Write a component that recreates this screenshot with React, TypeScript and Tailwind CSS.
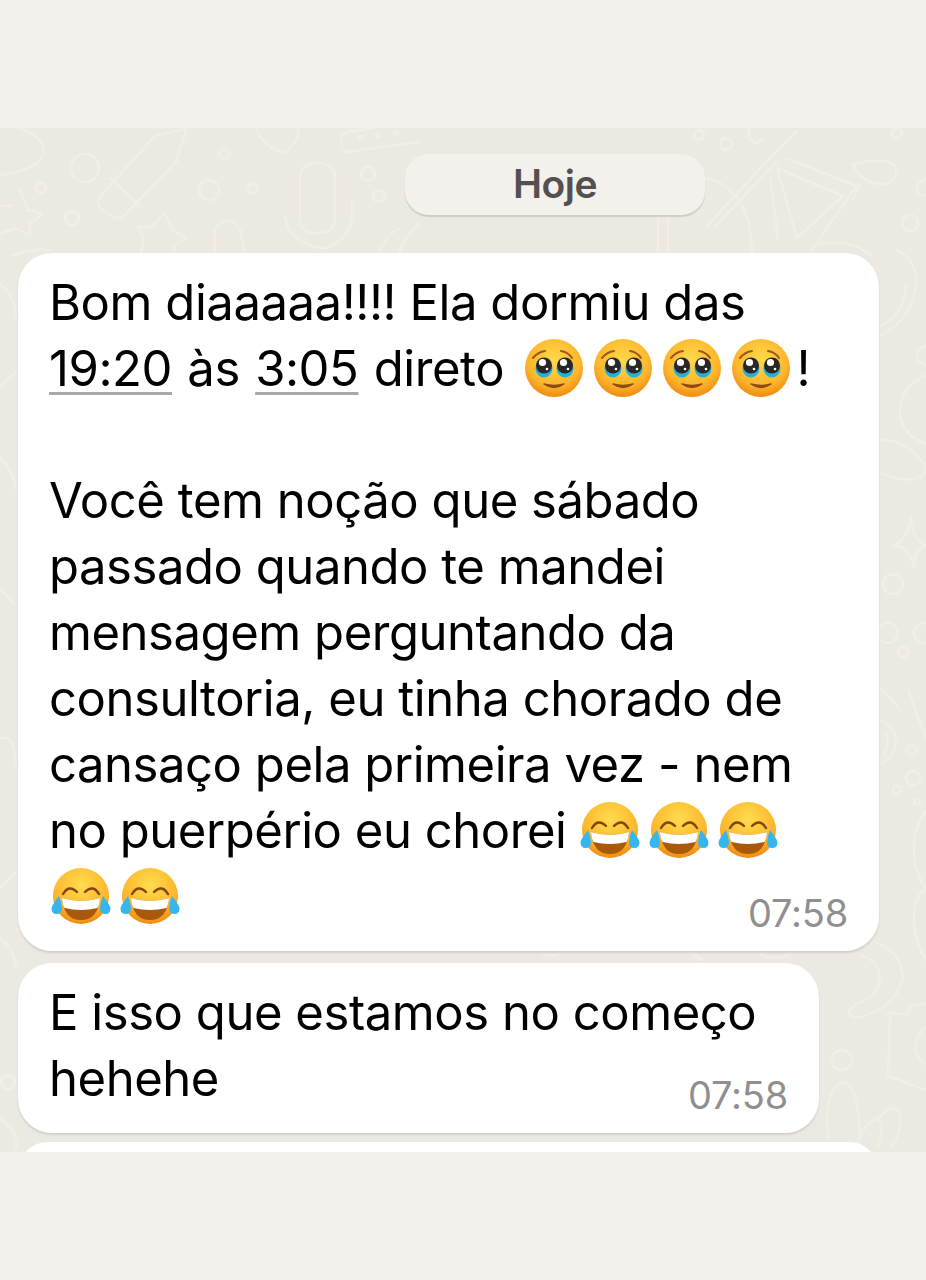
const Pleading = () => (
  <svg viewBox="0 0 60 60" className="inline-block w-[60px] h-[60px] mr-[9px] align-[-12px]">
    <defs>
      <radialGradient id="pf" cx="50%" cy="35%" r="65%">
        <stop offset="0%" stopColor="#ffd84a" />
        <stop offset="70%" stopColor="#fdb62c" />
        <stop offset="100%" stopColor="#f08a12" />
      </radialGradient>
    </defs>
    <circle cx="30" cy="30" r="29" fill="url(#pf)" />
    <path d="M9 20 Q14 14 21 13" fill="none" stroke="#a0561a" strokeWidth="2" strokeLinecap="round" />
    <path d="M48 20 Q44 14 37 13" fill="none" stroke="#a0561a" strokeWidth="2" strokeLinecap="round" />
    <ellipse cx="20" cy="30" rx="8.5" ry="9.5" fill="#1fb2de" />
    <ellipse cx="41" cy="30" rx="8.5" ry="9.5" fill="#1fb2de" />
    <circle cx="20" cy="27.5" r="8" fill="#2b2626" />
    <circle cx="41" cy="27.5" r="8" fill="#2b2626" />
    <circle cx="18.5" cy="24.5" r="3.6" fill="#fff" />
    <circle cx="39.5" cy="24.5" r="3.6" fill="#fff" />
    <circle cx="23" cy="31" r="1.3" fill="#fff" />
    <circle cx="44" cy="31" r="1.3" fill="#fff" />
    <path d="M20 46 Q30 53 40 46 Q30 49 20 46Z" fill="#8e4a12" stroke="#8e4a12" strokeWidth="1.4" strokeLinejoin="round" />
  </svg>
);

const Laugh = () => (
  <svg viewBox="0 0 60 58" className="inline-block w-[60px] h-[58px] mr-[9px] align-[-11px]">
    <defs>
      <radialGradient id="lf" cx="50%" cy="30%" r="70%">
        <stop offset="0%" stopColor="#ffdc4e" />
        <stop offset="70%" stopColor="#fdb62c" />
        <stop offset="100%" stopColor="#ef8a12" />
      </radialGradient>
    </defs>
    <circle cx="30" cy="29" r="28" fill="url(#lf)" />
    <path d="M12 27 Q18 17 26 25" fill="none" stroke="#80460f" strokeWidth="2.4" strokeLinecap="round" />
    <path d="M34 25 Q42 17 48 27" fill="none" stroke="#80460f" strokeWidth="2.4" strokeLinecap="round" />
    <path d="M11 31 Q30 37 49 31 Q47 53 30 53 Q13 53 11 31Z" fill="#a8590c" />
    <path d="M11 31 Q30 37 49 31 Q48.5 38 46.5 41 Q30 45 13.5 41 Q11.5 38 11 31Z" fill="#fff" />
    <path d="M8 29 Q1 38 0.5 41 Q0.5 47 5.5 47 Q11 47 11 41 Q10.5 35 8 29Z" fill="#35b6ee" />
    <path d="M52 29 Q59 38 59.5 41 Q59.5 47 54.5 47 Q49 47 49 41 Q49.5 35 52 29Z" fill="#35b6ee" />
  </svg>
);

const Doodles = () => (
  <svg viewBox="0 0 926 1024" className="absolute inset-0 w-full h-full" fill="none" stroke="#f1eee8" strokeWidth="2.5" strokeLinecap="round" strokeLinejoin="round">
    {/* top-left */}
    <path d="M18 0 Q44 8 44 24 Q40 42 0 47" />
    <circle cx="85" cy="40" r="14" /><circle cx="41" cy="60" r="5" /><circle cx="72" cy="90" r="7" />
    <path d="M20 62 L28 82 L42 86 L30 96 L30 108 L16 100 L0 106 M0 78 L12 78 Z" />
    <path d="M99 70 L155 8 L187 0 L176 34 L122 90 Q114 92 100 80 Q96 75 99 70Z M110 50 L140 78" />
    <circle cx="209" cy="62" r="10" /><circle cx="253" cy="61" r="5" /><circle cx="224" cy="26" r="5" />
    <path d="M300 50 Q300 35 317 35 Q335 35 335 50 L335 90 Q335 105 317 105 Q300 105 300 90Z" />
    <path d="M285 88 Q290 118 325 120 Q356 112 352 72" />
    <circle cx="368" cy="46" r="7" /><circle cx="379" cy="68" r="6" />
    <path d="M256 0 Q264 20 285 25 Q300 12 298 0" />
    <path d="M346 24 Q336 14 346 4 L376 0 M346 24 L420 14" />
    <circle cx="360" cy="10" r="2" /><circle cx="378" cy="7" r="2" /><circle cx="396" cy="5" r="2" />
    <path d="M165 85 L172 102 L186 110 L174 118 L174 128 M138 98 L150 100 L165 85 M138 98 L144 112 L140 128" />
    <path d="M215 128 L215 100 Q230 84 240 102 L246 128" />
    <path d="M378 128 Q384 108 400 100 M398 128 Q402 112 418 96" />
    <path d="M12 128 Q30 120 50 122" />
    {/* bike */}
    <path d="M707 98 L767 33 L797 3 M716 98 L776 34" />
    <path d="M750 0 Q745 8 755 16 L764 10" />
    <path d="M777 40 L843 68 L797 110 Z" />
    <path d="M786 30 L856 58 L808 128 M770 48 L778 110" />
    <path d="M853 36 Q890 28 896 40 Q898 56 880 56 Q860 54 853 36Z M860 56 L852 72" />
    <path d="M705 50 Q752 60 752 128" /><path d="M658 128 L658 86 M668 128 L668 86" />
    <path d="M872 128 Q850 110 820 116" />
    <circle cx="910" cy="95" r="8" /><circle cx="726" cy="16" r="6" /><circle cx="699" cy="7" r="5" /><circle cx="897" cy="5" r="5" />
    <path d="M926 50 Q914 56 918 66 L926 68" />
    {/* right margin */}
    <path d="M878 209 Q916 190 916 150 Q914 130 896 122" /><path d="M880 198 Q904 188 906 156" />
    <path d="M926 218 Q914 222 918 232 L926 238" />
    <path d="M926 248 Q898 258 900 288 Q904 308 926 316" />
    <path d="M880 312 Q910 312 926 340 Q920 360 880 345" />
    <path d="M911 389 Q912 412 926 418 Q914 420 914 439 Q908 416 892 418 Q908 412 911 389Z" />
    <circle cx="893" cy="456" r="10" /><circle cx="888" cy="505" r="10" /><circle cx="903" cy="524" r="5" /><circle cx="924" cy="505" r="10" />
    <path d="M880 560 Q892 570 900 582" />
    <path d="M880 592 Q898 600 896 616 Q892 632 880 636 M886 604 Q890 616 884 626" />
    <circle cx="912" cy="622" r="5" /><circle cx="913" cy="650" r="7" /><circle cx="897" cy="662" r="4" /><circle cx="917" cy="674" r="3" />
    <path d="M926 682 Q912 700 914 730 Q918 752 926 760 M926 762 Q912 768 914 796 Q918 822 926 832" />
    <path d="M908 562 Q918 590 926 610" />
    <path d="M877 815 Q900 822 903 850 Q896 880 858 890 Q840 888 856 876 Q886 866 878 840 Q870 828 860 828" />
    <path d="M890 885 L906 886 L912 878 L926 876 M890 885 L888 948 L926 962" />
    <path d="M926 900 Q914 906 916 924 Q920 934 926 936" />
    <circle cx="842" cy="932" r="10" /><path d="M828 1010 Q824 962 842 954 Q858 954 860 1010" />
    <path d="M857 1020 Q860 998 878 990 Q884 1000 878 1020 M878 990 Q896 972 900 986 Q902 1005 890 1020" />
    {/* gaps between bubbles */}
    <path d="M540 824 Q552 832 560 824 M690 824 L702 832 M760 826 Q776 834 790 826" />
    {/* left margin */}
    <path d="M0 156 Q16 168 16 190 M0 258 L16 244 M0 330 Q14 342 16 362 M0 460 L14 476 M0 610 Q16 606 16 640 M0 760 L16 744 M0 810 Q14 820 16 840" />
    <circle cx="8" cy="954" r="7" />
    <path d="M0 990 L12 1002 Q18 1012 16 1020" />
  </svg>
);

export default function App() {
  const text = "text-black text-[49px] leading-[66px] tracking-[-0.45px]";
  const link = "underline decoration-[#a8a8a8] decoration-[3px] underline-offset-[6px]";
  const time = "text-[38px] leading-[40px] tracking-[-0.2px] text-[#8f8f8f] mb-[-3px]";
  return (
    <div className="w-[926px] h-[1280px] flex flex-col bg-[#f4f0eb] font-['Inter','Liberation_Sans',sans-serif]">
      <div className="h-[128px] shrink-0" />
      <div className="relative h-[1024px] shrink-0 overflow-hidden bg-[#ece8e2] px-[18px] pt-[26px] flex flex-col">
        <Doodles />
        <div className="relative self-center shrink-0 ml-[184px] w-[300px] h-[61px] rounded-[24px] bg-[#f4f0eb] shadow-[0_2px_1px_#cfccc6] flex items-center justify-center text-[39px] font-semibold tracking-[-0.5px] text-[#54504f]">
          Hoje
        </div>
        <div className="relative mt-[38px] w-[861px] h-[698px] shrink-0 rounded-[34px] bg-white shadow-[0_2px_2px_#d3d0ca] pl-[31px] pr-[31px] pt-[17px]">
          <div className={`${text} whitespace-nowrap`}>
            Bom diaaaaa!!!! Ela dormiu das<br />
            <span className="[word-spacing:2px]">
              <span className={link}>19:20</span> às <span className={link}>3:05</span> direto{" "}
            </span>
            <span className="ml-[5px]" />
            <Pleading /><Pleading /><Pleading /><Pleading />
            <span className="-ml-[4px]">!</span><br />
            <br />
            Você tem noção que sábado<br />
            passado quando te mandei<br />
            mensagem perguntando da<br />
            consultoria, eu tinha chorado de<br />
            cansaço pela primeira vez - nem<br />
            no puerpério eu chorei{" "}
            <Laugh /><Laugh /><Laugh /><br />
            <div className="flex justify-between items-end">
              <div className="ml-[2px]"><Laugh /><Laugh /></div>
              <span className={time}>07:58</span>
            </div>
          </div>
        </div>
        <div className="relative mt-[12px] w-[801px] h-[170px] shrink-0 rounded-[34px] bg-white shadow-[0_2px_2px_#d3d0ca] pl-[31px] pr-[31px] pt-[17px]">
          <div className={`${text} whitespace-nowrap`}>
            E isso que estamos no começo
            <div className="flex justify-between items-end">
              <span>hehehe</span>
              <span className={time}>07:58</span>
            </div>
          </div>
        </div>
        <div className="relative mt-[9px] w-[861px] h-[60px] shrink-0 rounded-[34px] bg-white" />
      </div>
    </div>
  );
}
